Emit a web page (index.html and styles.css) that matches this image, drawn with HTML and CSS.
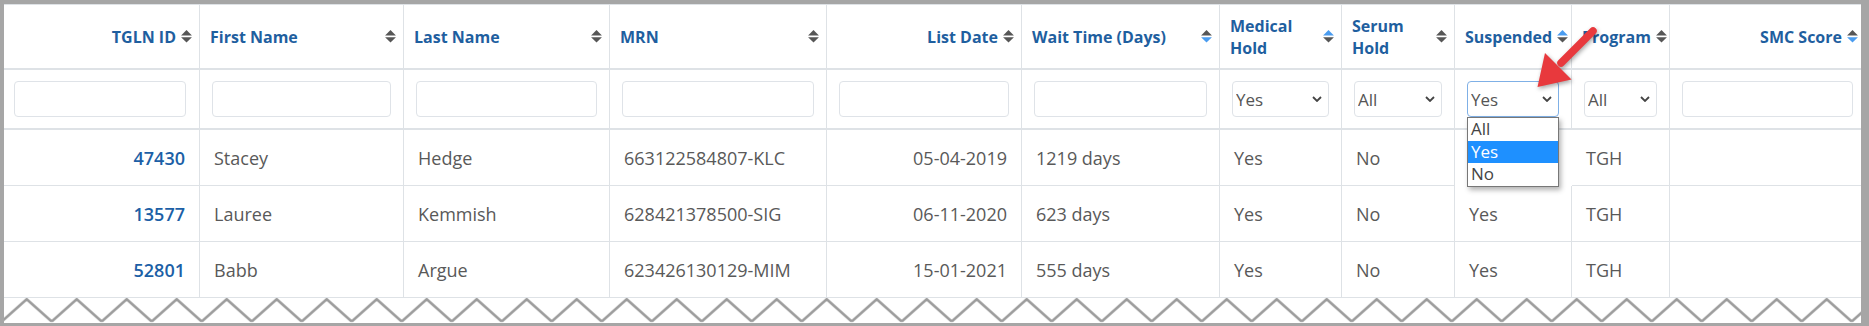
FILE: index.html
```html
<!DOCTYPE html>
<html lang="en">
<head>
    <meta charset="UTF-8">
    <meta name="viewport" content="width=device-width, initial-scale=1.0">
    <title>Waitlist</title>
    <link rel="stylesheet" href="styles.css">
</head>
<body>
    <div class="frame">
        <table class="grid">
            <colgroup>
                <col class="w-id">
                <col class="w-first">
                <col class="w-last">
                <col class="w-mrn">
                <col class="w-date">
                <col class="w-wait">
                <col class="w-med">
                <col class="w-serum">
                <col class="w-susp">
                <col class="w-prog">
                <col class="w-smc">
            </colgroup>
            <thead>
                <tr class="head-row">
                    <th class="num"><div class="th-in"><span>TGLN ID</span><svg class="sort" viewBox="0 0 10 12"><path class="up" d="M0 5 5 0 10 5z"/><path class="down" d="M0 6.6h10l-5 5z"/></svg></div></th>
                    <th><div class="th-in"><span>First Name</span><svg class="sort" viewBox="0 0 10 12"><path class="up" d="M0 5 5 0 10 5z"/><path class="down" d="M0 6.6h10l-5 5z"/></svg></div></th>
                    <th><div class="th-in"><span>Last Name</span><svg class="sort" viewBox="0 0 10 12"><path class="up" d="M0 5 5 0 10 5z"/><path class="down" d="M0 6.6h10l-5 5z"/></svg></div></th>
                    <th><div class="th-in"><span>MRN</span><svg class="sort" viewBox="0 0 10 12"><path class="up" d="M0 5 5 0 10 5z"/><path class="down" d="M0 6.6h10l-5 5z"/></svg></div></th>
                    <th class="num"><div class="th-in"><span>List Date</span><svg class="sort" viewBox="0 0 10 12"><path class="up" d="M0 5 5 0 10 5z"/><path class="down" d="M0 6.6h10l-5 5z"/></svg></div></th>
                    <th><div class="th-in"><span>Wait Time (Days)</span><svg class="sort desc" viewBox="0 0 10 12"><path class="up" d="M0 5 5 0 10 5z"/><path class="down" d="M0 6.6h10l-5 5z"/></svg></div></th>
                    <th><div class="th-in"><span>Medical Hold</span><svg class="sort asc" viewBox="0 0 10 12"><path class="up" d="M0 5 5 0 10 5z"/><path class="down" d="M0 6.6h10l-5 5z"/></svg></div></th>
                    <th><div class="th-in"><span>Serum Hold</span><svg class="sort" viewBox="0 0 10 12"><path class="up" d="M0 5 5 0 10 5z"/><path class="down" d="M0 6.6h10l-5 5z"/></svg></div></th>
                    <th><div class="th-in"><span>Suspended</span><svg class="sort asc" viewBox="0 0 10 12"><path class="up" d="M0 5 5 0 10 5z"/><path class="down" d="M0 6.6h10l-5 5z"/></svg></div></th>
                    <th><div class="th-in"><span>Program</span><svg class="sort" viewBox="0 0 10 12"><path class="up" d="M0 5 5 0 10 5z"/><path class="down" d="M0 6.6h10l-5 5z"/></svg></div></th>
                    <th class="num last"><div class="th-in"><span>SMC Score</span><svg class="sort desc" viewBox="0 0 10 12"><path class="up" d="M0 5 5 0 10 5z"/><path class="down" d="M0 6.6h10l-5 5z"/></svg></div></th>
                </tr>
                <tr class="filter-row">
                    <td class="first"><input type="text"></td>
                    <td><input type="text"></td>
                    <td><input type="text"></td>
                    <td><input type="text"></td>
                    <td><input type="text"></td>
                    <td><input type="text"></td>
                    <td>
                        <div class="pick">
                            <select><option>Yes</option><option>All</option><option>No</option></select>
                            <svg class="chev" viewBox="0 0 10 6"><polyline points="1,1 5,5 9,1"/></svg>
                        </div>
                    </td>
                    <td>
                        <div class="pick">
                            <select><option>All</option><option>Yes</option><option>No</option></select>
                            <svg class="chev" viewBox="0 0 10 6"><polyline points="1,1 5,5 9,1"/></svg>
                        </div>
                    </td>
                    <td>
                        <div class="pick open">
                            <select><option>Yes</option><option>All</option><option>No</option></select>
                            <svg class="chev" viewBox="0 0 10 6"><polyline points="1,1 5,5 9,1"/></svg>
                            <ul class="options">
                                <li>All</li>
                                <li class="on">Yes</li>
                                <li>No</li>
                            </ul>
                        </div>
                    </td>
                    <td>
                        <div class="pick">
                            <select><option>All</option><option>Yes</option><option>No</option></select>
                            <svg class="chev" viewBox="0 0 10 6"><polyline points="1,1 5,5 9,1"/></svg>
                        </div>
                    </td>
                    <td class="last"><input type="text"></td>
                </tr>
            </thead>
            <tbody>
                <tr>
                    <td class="num id">47430</td>
                    <td>Stacey</td>
                    <td>Hedge</td>
                    <td>663122584807-KLC</td>
                    <td class="num">05-04-2019</td>
                    <td>1219 days</td>
                    <td>Yes</td>
                    <td>No</td>
                    <td class="hidden-by-menu">Yes</td>
                    <td>TGH</td>
                    <td></td>
                </tr>
                <tr>
                    <td class="num id">13577</td>
                    <td>Lauree</td>
                    <td>Kemmish</td>
                    <td>628421378500-SIG</td>
                    <td class="num">06-11-2020</td>
                    <td>623 days</td>
                    <td>Yes</td>
                    <td>No</td>
                    <td>Yes</td>
                    <td>TGH</td>
                    <td></td>
                </tr>
                <tr>
                    <td class="num id">52801</td>
                    <td>Babb</td>
                    <td>Argue</td>
                    <td>623426130129-MIM</td>
                    <td class="num">15-01-2021</td>
                    <td>555 days</td>
                    <td>Yes</td>
                    <td>No</td>
                    <td>Yes</td>
                    <td>TGH</td>
                    <td></td>
                </tr>
            </tbody>
        </table>

        <!-- torn edge at the bottom of the capture -->
        <svg class="tear" width="1857" height="25">
            <defs>
                <pattern id="zigzag" width="50" height="25" patternUnits="userSpaceOnUse" x="-2.3">
                    <polyline points="0,23.6 25,1.2 50,23.6" fill="none" stroke="#9d9d9d" stroke-width="2.6"/>
                </pattern>
            </defs>
            <rect width="100%" height="100%" fill="url(#zigzag)"/>
        </svg>

        <!-- callout arrow pointing at the Suspended filter -->
        <svg class="callout" viewBox="0 0 80 80" width="80" height="80">
            <line x1="68" y1="11" x2="36" y2="43" stroke="#e8393d" stroke-width="7.5" stroke-linecap="round"/>
            <polygon points="12.5,67 20,33 46.5,59.5" fill="#e8393d"/>
        </svg>
    </div>
</body>
</html>
```

FILE: styles.css
```css
body {
    margin: 0;
    font-family: "Open Sans", "DejaVu Sans", sans-serif;
    background-color: #fff;
}
.frame {
    position: relative;
    height: 326px;
    box-sizing: border-box;
    border: solid #a6a6a6;
    border-width: 4px 8px 3px 4px;
    overflow: hidden;
}
.grid {
    width: 1862px;
    table-layout: fixed;
    border-collapse: separate;
    border-spacing: 0;
    border-top: 1px solid #dee2e6;
}
.w-id { width: 196px; }
.w-first { width: 204px; }
.w-last { width: 206px; }
.w-mrn { width: 217px; }
.w-date { width: 195px; }
.w-wait { width: 198px; }
.w-med { width: 122px; }
.w-serum { width: 113px; }
.w-susp { width: 117px; }
.w-prog { width: 98px; }
.w-smc { width: 196px; }

th, td {
    box-sizing: border-box;
    padding: 0;
    border-right: 1px solid #dee2e6;
    border-bottom: 1px solid #dee2e6;
    vertical-align: middle;
}

/* header */
.head-row {
    height: 65px;
}
.head-row th {
    border-bottom-width: 2px;
    padding: 0 7px 0 10px;
    font-size: 16px;
    line-height: 22px;
    font-weight: 700;
    color: #1f5f9f;
    text-align: left;
}
.th-in {
    display: flex;
    align-items: center;
    justify-content: space-between;
    gap: 5px;
}
.num .th-in {
    justify-content: flex-end;
}
.sort {
    flex-shrink: 0;
    width: 11px;
    height: 13px;
}
.sort path {
    fill: #565656;
}
.sort.asc .up, .sort.desc .down {
    fill: #4a9cf0;
}

/* filter row */
.filter-row {
    height: 60px;
}
.filter-row td {
    border-bottom-width: 2px;
    padding: 0 12px;
}
.filter-row td.first {
    padding-left: 10px;
    padding-right: 13px;
}
.filter-row input {
    display: block;
    box-sizing: border-box;
    width: 100%;
    height: 36px;
    border: 1px solid #dfe3e8;
    border-radius: 4px;
    background: #fff;
}
.pick {
    position: relative;
}
.pick select {
    display: block;
    box-sizing: border-box;
    width: 100%;
    height: 36px;
    padding: 0 20px 0 3px;
    border: 1px solid #dfe3e8;
    border-radius: 4px;
    background: #fff;
    appearance: none;
    -webkit-appearance: none;
    font-family: "Open Sans", sans-serif;
    font-size: 17px;
    color: #555;
}
.pick.open select {
    border-color: #7fb0e6;
}
.chev {
    position: absolute;
    right: 7px;
    top: 15px;
    width: 10px;
    height: 6px;
    fill: none;
    stroke: #444;
    stroke-width: 1.8;
}
.options {
    position: absolute;
    left: 0;
    top: 100%;
    width: 100%;
    box-sizing: border-box;
    margin: 0;
    padding: 0;
    list-style: none;
    border: 1px solid #777;
    background: #fff;
    box-shadow: 2px 3px 5px rgba(0, 0, 0, 0.3);
    z-index: 2;
}
.options li {
    height: 22.67px;
    line-height: 22.67px;
    padding-left: 3px;
    font-size: 17px;
    color: #444;
}
.options li.on {
    background-color: #1e90ff;
    color: #fff;
}

/* body rows */
tbody tr {
    height: 56px;
}
tbody td {
    padding: 0 14px;
    font-size: 18px;
    color: #595959;
    white-space: nowrap;
}
td.num {
    text-align: right;
}
td.id {
    font-weight: 600;
    color: #1c5fa6;
}
td.hidden-by-menu {
    visibility: hidden;
}

.tear {
    display: block;
}
.callout {
    position: absolute;
    left: 1521px;
    top: 16px;
    filter: drop-shadow(1px 2px 2px rgba(0, 0, 0, 0.35));
    z-index: 3;
}
```
